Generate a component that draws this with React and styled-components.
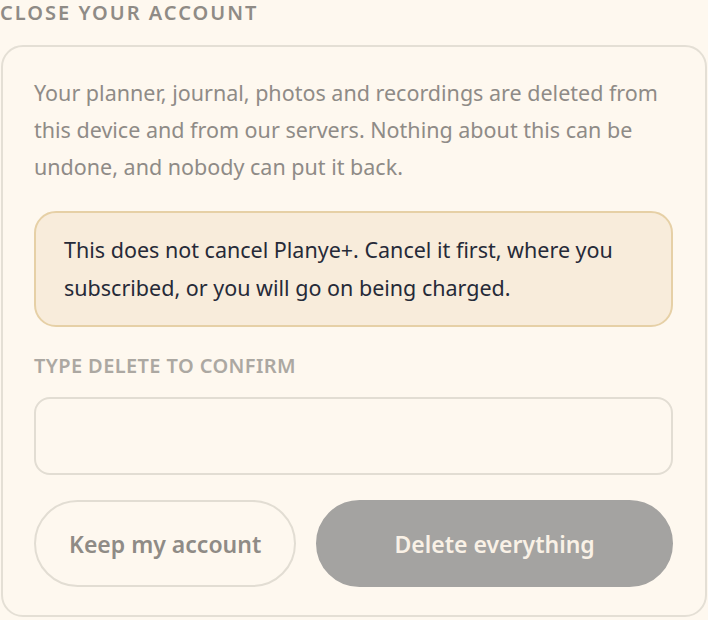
import React, { useState } from 'react'
import styled, { createGlobalStyle } from 'styled-components'

const GlobalStyle = createGlobalStyle`
  html, body {
    margin: 0;
    padding: 0;
    background: #fef8ef;
  }
  body {
    font-family: 'Noto Sans', 'Open Sans', sans-serif;
  }
`

const Page = styled.div`
  width: 708px;
  padding-top: 1px;
  box-sizing: border-box;
`

const Heading = styled.h2`
  margin: 0 0 20px 0;
  font-size: 20px;
  line-height: 24px;
  font-weight: 600;
  letter-spacing: 2px;
  color: #8f8b86;
  text-transform: uppercase;
`

const Card = styled.section`
  margin-left: 1px;
  width: 706px;
  box-sizing: border-box;
  border: 2px solid #e4dfd5;
  border-radius: 22px;
  padding: 27px 32px 28px 31px;
  display: flex;
  flex-direction: column;
`

const Lead = styled.p`
  margin: 0 0 26px 0;
  font-size: 21.5px;
  line-height: 37px;
  color: #8f8b87;
`

const Notice = styled.div`
  border: 2px solid #e6d0a6;
  background: #f8ecdb;
  border-radius: 22px;
  padding: 18px 28px;
  font-size: 21.5px;
  line-height: 38px;
  color: #262a38;
  margin-bottom: 28px;
`

const Label = styled.label`
  display: block;
  font-size: 20px;
  line-height: 22px;
  font-weight: 600;
  letter-spacing: 0.4px;
  color: #aca8a2;
  text-transform: uppercase;
  margin-bottom: 20px;
`

const Input = styled.input`
  box-sizing: border-box;
  width: 100%;
  height: 78px;
  border: 2px solid #e2ddd3;
  border-radius: 16px;
  background: transparent;
  padding: 0 20px;
  font: inherit;
  font-size: 21px;
  color: #262a38;
  outline: none;
  margin-bottom: 25px;
`

const Actions = styled.div`
  display: flex;
  gap: 20px;
`

const Button = styled.button`
  height: 87px;
  border-radius: 44px;
  font-family: inherit;
  font-size: 23px;
  font-weight: 600;
  cursor: pointer;
  box-sizing: border-box;
  padding: 0 33px;
  border: 2px solid ${({ $primary }) => ($primary ? '#a4a3a1' : '#e2ddd3')};
  background: ${({ $primary }) => ($primary ? '#a4a3a1' : 'transparent')};
  color: ${({ $primary }) => ($primary ? '#f9f1e6' : '#8f8b86')};
  flex: ${({ $primary }) => ($primary ? 1 : '0 0 auto')};
`

export default function App() {
  const [value, setValue] = useState('')
  const ok = value === 'DELETE'

  return (
    <>
      <GlobalStyle />
      <Page>
        <Heading>Close your account</Heading>
        <Card>
          <Lead>
            Your planner, journal, photos and recordings are deleted from this device and from our
            servers. Nothing about this can be undone, and nobody can put it back.
          </Lead>
          <Notice>
            This does not cancel Planye+. Cancel it first, where you subscribed, or you will go on
            being charged.
          </Notice>
          <Label htmlFor='confirm'>Type DELETE to confirm</Label>
          <Input id='confirm' value={value} onChange={(e) => setValue(e.target.value)} />
          <Actions>
            <Button>Keep my account</Button>
            <Button $primary disabled={!ok}>Delete everything</Button>
          </Actions>
        </Card>
      </Page>
    </>
  )
}
